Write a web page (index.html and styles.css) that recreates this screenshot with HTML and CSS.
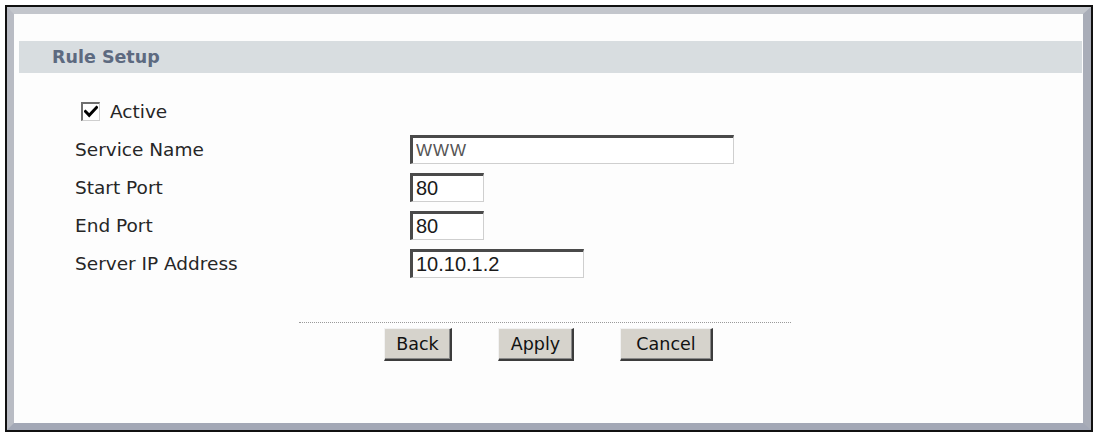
FILE: index.html
```html
<!DOCTYPE html>
<html>
<head>
<meta charset="utf-8">
<link rel="stylesheet" href="styles.css">
</head>
<body>
<div class="frame">
  <div class="bevel">
    <div class="content">
      <div class="section-head">Rule Setup</div>
      <div class="form">
        <div class="row check-row">
          <span class="checkbox">
            <svg viewBox="0 0 14 14" width="14" height="14"><path d="M1.5 6.5 L5.2 10.3 L12.5 2.5" fill="none" stroke="#000" stroke-width="3" stroke-linecap="square"/></svg>
          </span>
          <span class="label">Active</span>
        </div>
        <div class="row">
          <span class="label">Service Name</span>
          <input class="field wide thin" type="text" value="WWW">
        </div>
        <div class="row">
          <span class="label">Start Port</span>
          <input class="field short" type="text" value="80">
        </div>
        <div class="row">
          <span class="label">End Port</span>
          <input class="field short" type="text" value="80">
        </div>
        <div class="row">
          <span class="label">Server IP Address</span>
          <input class="field medium" type="text" value="10.10.1.2">
        </div>
      </div>
      <div class="separator"></div>
      <div class="buttons">
        <button class="btn back">Back</button>
        <button class="btn apply">Apply</button>
        <button class="btn cancel">Cancel</button>
      </div>
    </div>
  </div>
</div>
</body>
</html>
```

FILE: styles.css
```css
html, body {
  margin: 0;
  padding: 0;
  background: #ffffff;
}

body {
  font-family: "DejaVu Sans", Verdana, sans-serif;
  color: #1e1e1e;
}

.frame {
  margin: 5px 0 0 5px;
  width: 1088px;
  height: 427px;
  box-sizing: border-box;
  border: 2px solid #111111;
}

.bevel {
  box-sizing: border-box;
  height: 100%;
  border-style: solid;
  border-width: 7px 8px 7px 7px;
  border-color: #c3c6cc #a9adb8 #a3a8b6 #b9bcc4;
  box-shadow: inset 1px 1px 0 #8e929a;
}

.content {
  height: 100%;
  background: #fdfdfd;
  padding-top: 27px;
  box-sizing: border-box;
}

.section-head {
  margin: 0 1px 0 5px;
  height: 32px;
  background: #d8dde0;
  color: #5d6a80;
  font-weight: bold;
  font-size: 17.5px;
  line-height: 32px;
  padding-left: 33px;
}

.form {
  margin-top: 19px;
  padding-left: 61px;
  display: grid;
  grid-template-columns: 335px auto;
  grid-auto-rows: 38px;
}

.row {
  display: contents;
}

.row > * {
  align-self: center;
  justify-self: start;
}

.check-row {
  display: flex;
  align-items: center;
  grid-column: 1 / 3;
  padding-left: 6px;
  gap: 10px;
}

.label {
  font-size: 18.5px;
  color: #262626;
}

.checkbox {
  width: 19px;
  height: 19px;
  box-sizing: border-box;
  border-style: solid;
  border-width: 2px 1px 1px 2px;
  border-color: #6e6e6e #cfcfcf #cfcfcf #6e6e6e;
  background: #ffffff;
  display: flex;
  align-items: center;
  justify-content: center;
}

.field {
  height: 29px;
  box-sizing: border-box;
  border-style: solid;
  border-width: 3px 1px 1px 3px;
  border-color: #4a4a4a #cfcfcf #cfcfcf #4a4a4a;
  background: #ffffff;
  font-family: "Liberation Sans", Arial, sans-serif;
  font-size: 20px;
  color: #1a1a1a;
  padding: 1px 3px 0 3px;
  outline: none;
}

.thin {
  font-size: 17px;
  color: #555555;
  letter-spacing: 1px;
}

.wide { width: 324px; }
.short { width: 74px; }
.medium { width: 174px; }

.separator {
  width: 492px;
  margin: 40px auto 0;
  border-top: 1px dotted #9a9a9a;
  position: relative;
  left: -4px;
}

.buttons {
  margin-top: 5px;
  display: flex;
  justify-content: center;
  gap: 46px;
}

.btn {
  height: 33px;
  box-sizing: border-box;
  background: #d6d3cc;
  font-family: "DejaVu Sans", Verdana, sans-serif;
  font-size: 17.5px;
  color: #111111;
  border-style: solid;
  border-width: 1px 2px 2px 1px;
  border-color: #f2f2f2 #3c3c3c #3c3c3c #f2f2f2;
  box-shadow: inset -1px -1px 0 #8a8a8a;
  padding: 0;
}

.back { width: 68px; }
.apply { width: 76px; }
.cancel { width: 93px; }
```
